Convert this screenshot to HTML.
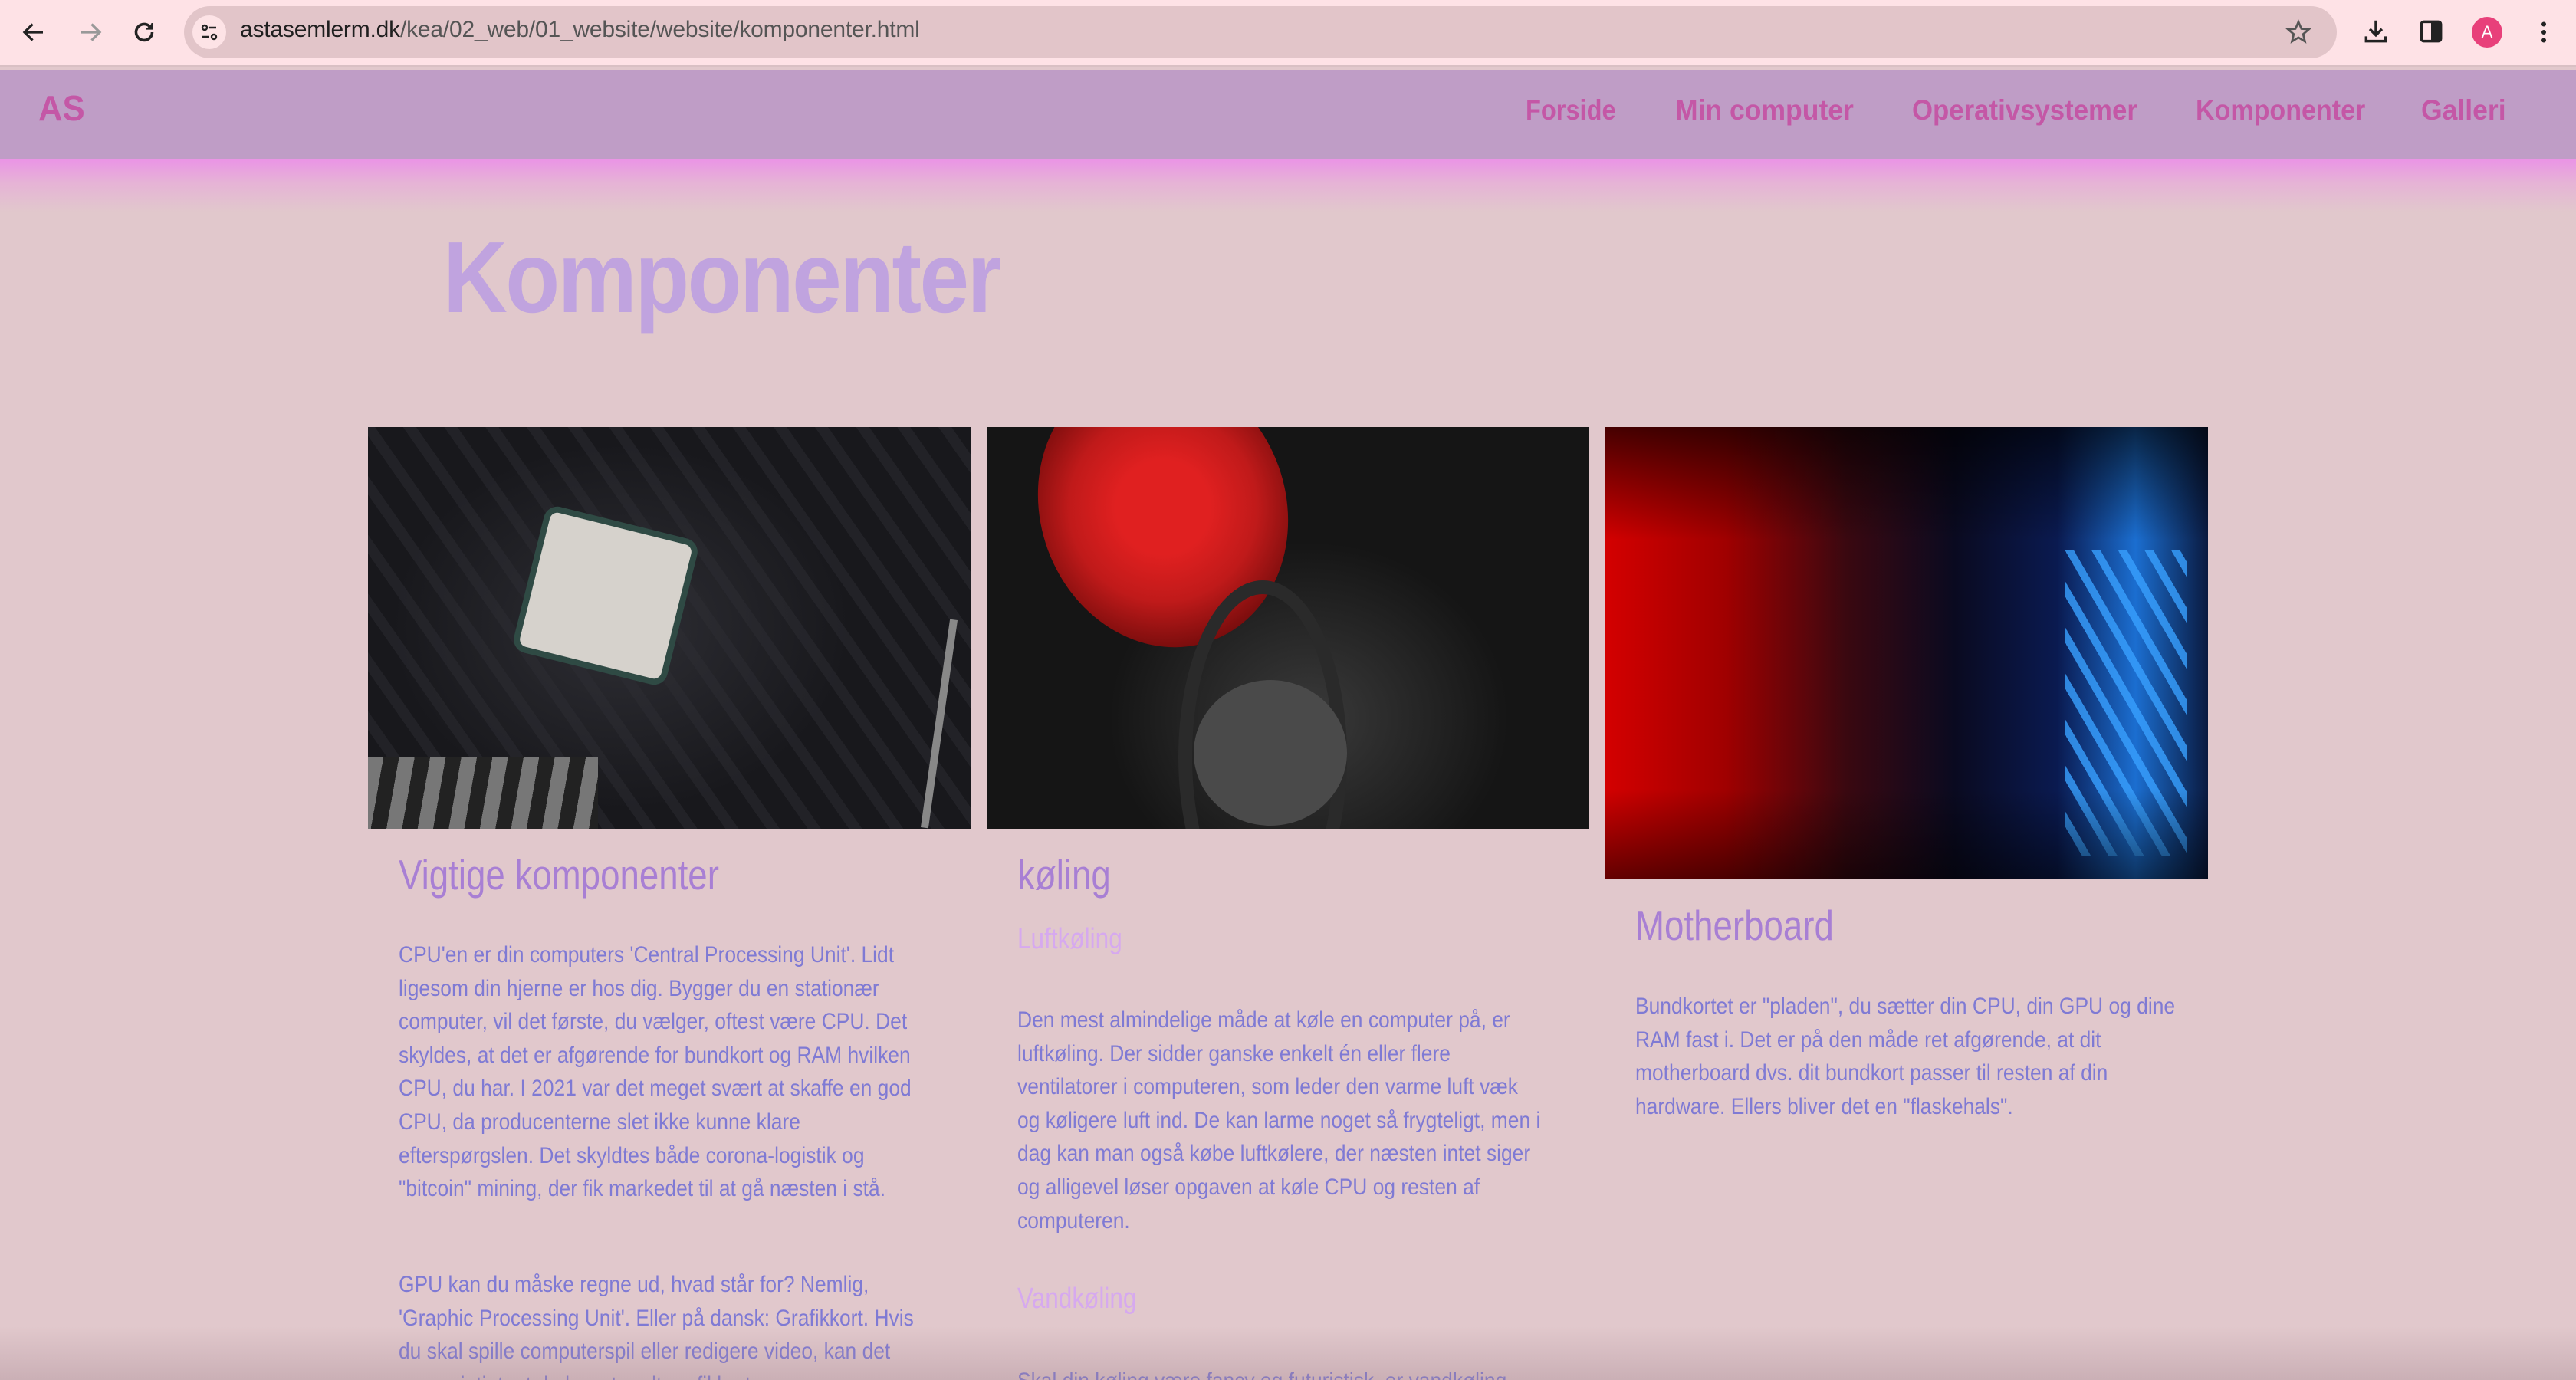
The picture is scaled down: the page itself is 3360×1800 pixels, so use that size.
<!DOCTYPE html>
<html><head><meta charset="utf-8">
<style>
*{margin:0;padding:0;box-sizing:border-box}
html,body{width:3360px;height:1800px;overflow:hidden;background:#e1c8cc;font-family:"Liberation Sans",sans-serif;position:relative}
.chrome{position:absolute;left:0;top:0;width:3360px;height:88px;background:#fee2e6;border-bottom:3px solid #d9c0c4}
.pill{position:absolute;left:240px;top:8px;width:2808px;height:68px;border-radius:34px;background:#e2c5c9}
.pill .ic{position:absolute;left:11px;top:12px;width:44px;height:44px;border-radius:22px;background:#fde3e6}
.url{position:absolute;left:313px;top:22px;font-size:30px;color:#555;white-space:nowrap;letter-spacing:-0.2px}
.url b{font-weight:normal;color:#1f1f1f}
.nav{position:absolute;left:0;top:91px;width:3360px;height:116px;background:#bf9dc6}
.glow{position:absolute;left:0;top:207px;width:3360px;height:70px;background:linear-gradient(#ea93e6,#e6b3d6 45%,#e1c8cc)}
.disp{font-family:"Liberation Sans",sans-serif;font-weight:bold;color:#c457a6;position:absolute;white-space:nowrap;transform-origin:left center}
.nl{font-size:37px;top:123px}
h1{position:absolute;left:578px;top:286px;font-size:132px;color:#c0a3df;font-weight:bold;white-space:nowrap;transform:scaleX(0.88);transform-origin:left top;letter-spacing:-3px}
.img{position:absolute;top:557px;overflow:hidden}
.txt{position:absolute;font-family:"Liberation Sans",sans-serif;white-space:nowrap;transform-origin:left top}
.h2{font-size:55px;color:#a87fd4;transform:scaleX(0.83)}
.h3{font-size:38px;color:#d6a9ef;transform:scaleX(0.83)}
.p{font-size:30px;line-height:43.6px;color:#7f7ad4;transform:scaleX(0.88)}
.shadow{position:absolute;left:0;top:1730px;width:3360px;height:70px;background:linear-gradient(rgba(180,150,160,0),rgba(160,130,140,0.35))}
</style></head><body>
<div class="chrome">
 <svg style="position:absolute;left:26px;top:24px" width="36" height="36" viewBox="0 0 24 24"><path d="M20 12H5M11 5l-7 7 7 7" fill="none" stroke="#222" stroke-width="2.2"/></svg>
 <svg style="position:absolute;left:100px;top:24px" width="36" height="36" viewBox="0 0 24 24"><path d="M4 12h15M13 5l7 7-7 7" fill="none" stroke="#999" stroke-width="2.2"/></svg>
 <svg style="position:absolute;left:170px;top:24px" width="36" height="36" viewBox="0 0 24 24"><path d="M19 12a7 7 0 1 1-2.5-5.4" fill="none" stroke="#222" stroke-width="2.4"/><path d="M19 4v5h-5" fill="#222" stroke="#222" stroke-width="1.5"/></svg>
 <div class="pill"><div class="ic"><svg width="44" height="44" viewBox="0 0 44 44"><circle cx="16" cy="16" r="3" fill="none" stroke="#222" stroke-width="2.4"/><path d="M22 16h9M13 28h9" stroke="#222" stroke-width="2.6"/><circle cx="28" cy="28" r="3" fill="none" stroke="#222" stroke-width="2.4"/></svg></div></div>
 <div class="url"><b>astasemlerm.dk</b>/kea/02_web/01_website/website/komponenter.html</div>
 <svg style="position:absolute;left:2980px;top:24px" width="36" height="36" viewBox="0 0 24 24"><path d="M12 3l2.6 6 6.4.5-4.9 4.2 1.5 6.3L12 16.6 6.4 20l1.5-6.3L3 9.5 9.4 9z" fill="none" stroke="#555" stroke-width="1.8"/></svg>
 <svg style="position:absolute;left:3080px;top:22px" width="38" height="38" viewBox="0 0 24 24"><path d="M12 3v12M7 10l5 5 5-5M4 16v4h16v-4" fill="none" stroke="#222" stroke-width="2.2"/></svg>
 <svg style="position:absolute;left:3152px;top:22px" width="38" height="38" viewBox="0 0 24 24"><rect x="4" y="4" width="16" height="16" rx="2" fill="none" stroke="#222" stroke-width="2.2"/><rect x="12" y="4" width="8" height="16" fill="#222"/></svg>
 <div style="position:absolute;left:3224px;top:22px;width:40px;height:40px;border-radius:20px;background:#e8407a;color:#fff;font-size:22px;text-align:center;line-height:40px">A</div>
 <svg style="position:absolute;left:3300px;top:24px" width="36" height="36" viewBox="0 0 24 24"><circle cx="12" cy="5" r="2" fill="#222"/><circle cx="12" cy="12" r="2" fill="#222"/><circle cx="12" cy="19" r="2" fill="#222"/></svg>
</div>
<div class="nav"></div>
<div class="glow"></div>
<div class="disp" style="left:50px;top:114px;font-size:46px;transform:scaleX(0.95)">AS</div>
<div class="disp nl" style="left:1990px;transform:scaleX(0.88)">Forside</div>
<div class="disp nl" style="left:2185px;transform:scaleX(0.96)">Min computer</div>
<div class="disp nl" style="left:2494px;transform:scaleX(0.94)">Operativsystemer</div>
<div class="disp nl" style="left:2864px;transform:scaleX(0.92)">Komponenter</div>
<div class="disp nl" style="left:3158px;transform:scaleX(0.96)">Galleri</div>
<h1>Komponenter</h1>

<div class="img" style="left:480px;width:787px;height:524px;background:radial-gradient(ellipse 300px 240px at 330px 260px,#2e2e34,transparent),repeating-linear-gradient(55deg,#18181c 0 30px,#222227 30px 44px),#1c1c20">
 <div style="position:absolute;left:215px;top:130px;width:190px;height:180px;background:#d6d2cc;border-radius:10px;transform:rotate(14deg);box-shadow:0 0 0 8px #2f4a44"></div>
 <div style="position:absolute;left:0;top:430px;width:300px;height:94px;background:repeating-linear-gradient(100deg,#777 0 20px,#222 20px 40px)"></div>
 <div style="position:absolute;left:740px;top:250px;width:10px;height:274px;background:#888;transform:rotate(8deg)"></div>
</div>
<div class="img" style="left:1287px;width:786px;height:524px;background:radial-gradient(ellipse 260px 230px at 420px 380px,#3a3a3a,transparent),#151515">
 <div style="position:absolute;left:70px;top:-80px;width:320px;height:370px;border-radius:50%;background:radial-gradient(circle,#e02020 0 25%,#c01a1a 50%,#7a0d0d 75%,#111 80%);transform:rotate(-20deg)"></div>
 <div style="position:absolute;left:250px;top:200px;width:220px;height:460px;border:18px solid #2a2a2a;border-radius:50%"></div>
 <div style="position:absolute;left:270px;top:330px;width:200px;height:190px;border-radius:50%;background:#4a4a4a"></div>
</div>
<div class="img" style="left:2093px;width:787px;height:590px;background:linear-gradient(90deg,#d40000 0%,#a00000 20%,#3a0810 40%,#0a0a20 58%,#0a1a50 75%,#1b6ed0 88%,#0a1a40 100%)">
 <div style="position:absolute;left:600px;top:160px;width:160px;height:400px;background:repeating-linear-gradient(60deg,transparent 0 20px,#38a0ff 20px 30px);opacity:0.8"></div>
 <div style="position:absolute;left:0;top:0;width:787px;height:590px;background:linear-gradient(#000a 0,transparent 25%,transparent 80%,#0008)"></div>
</div>

<div class="txt h2" style="left:520px;top:1109px">Vigtige komponenter</div>
<div class="txt p" style="left:520px;top:1224px">CPU'en er din computers 'Central Processing Unit'. Lidt<br>ligesom din hjerne er hos dig. Bygger du en stationær<br>computer, vil det første, du vælger, oftest være CPU. Det<br>skyldes, at det er afgørende for bundkort og RAM hvilken<br>CPU, du har. I 2021 var det meget svært at skaffe en god<br>CPU, da producenterne slet ikke kunne klare<br>efterspørgslen. Det skyldtes både corona-logistik og<br>"bitcoin" mining, der fik markedet til at gå næsten i stå.</div>
<div class="txt p" style="left:520px;top:1654px">GPU kan du måske regne ud, hvad står for? Nemlig,<br>'Graphic Processing Unit'. Eller på dansk: Grafikkort. Hvis<br>du skal spille computerspil eller redigere video, kan det<br>være vigtigt, at du har et godt grafikkort.</div>

<div class="txt h2" style="left:1327px;top:1109px">køling</div>
<div class="txt h3" style="left:1327px;top:1204px">Luftkøling</div>
<div class="txt p" style="left:1327px;top:1309px">Den mest almindelige måde at køle en computer på, er<br>luftkøling. Der sidder ganske enkelt én eller flere<br>ventilatorer i computeren, som leder den varme luft væk<br>og køligere luft ind. De kan larme noget så frygteligt, men i<br>dag kan man også købe luftkølere, der næsten intet siger<br>og alligevel løser opgaven at køle CPU og resten af<br>computeren.</div>
<div class="txt h3" style="left:1327px;top:1673px">Vandkøling</div>
<div class="txt p" style="left:1327px;top:1780px">Skal din køling være fancy og futuristisk, er vandkøling</div>

<div class="txt h2" style="left:2133px;top:1175px">Motherboard</div>
<div class="txt p" style="left:2133px;top:1291px">Bundkortet er "pladen", du sætter din CPU, din GPU og dine<br>RAM fast i. Det er på den måde ret afgørende, at dit<br>motherboard dvs. dit bundkort passer til resten af din<br>hardware. Ellers bliver det en "flaskehals".</div>
<div class="shadow"></div>
</body></html>
